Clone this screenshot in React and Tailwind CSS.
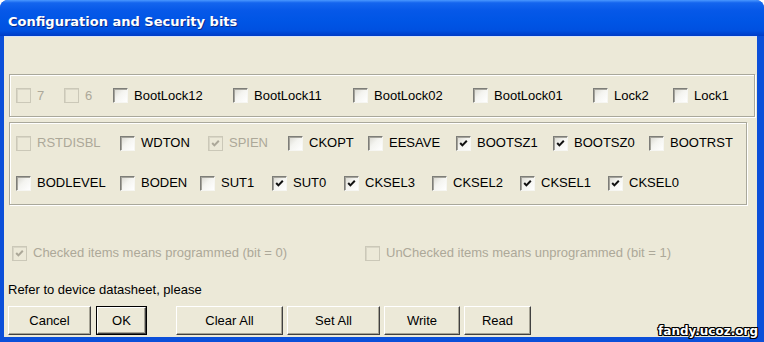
import clsx from 'clsx'

// Fusebits dialog, Windows XP look
const ROW_LOCK = [
  { label: '7', w: 48, disabled: true },
  { label: '6', w: 49, disabled: true },
  { label: 'BootLock12', w: 120 },
  { label: 'BootLock11', w: 120 },
  { label: 'BootLock02', w: 120 },
  { label: 'BootLock01', w: 120 },
  { label: 'Lock2', w: 80 },
  { label: 'Lock1', w: 70 },
]

const ROW_HIGH = [
  { label: 'RSTDISBL', w: 104, disabled: true },
  { label: 'WDTON', w: 88 },
  { label: 'SPIEN', w: 80, disabled: true, checked: true },
  { label: 'CKOPT', w: 80 },
  { label: 'EESAVE', w: 88 },
  { label: 'BOOTSZ1', w: 97, checked: true },
  { label: 'BOOTSZ0', w: 96, checked: true },
  { label: 'BOOTRST', w: 90 },
]

const ROW_LOW = [
  { label: 'BODLEVEL', w: 104 },
  { label: 'BODEN', w: 80 },
  { label: 'SUT1', w: 72 },
  { label: 'SUT0', w: 72, checked: true },
  { label: 'CKSEL3', w: 88, checked: true },
  { label: 'CKSEL2', w: 88 },
  { label: 'CKSEL1', w: 88, checked: true },
  { label: 'CKSEL0', w: 90, checked: true },
]

const BUTTONS = [
  { label: 'Cancel', w: 83, ml: 'ml-0' },
  { label: 'OK', w: 51, ml: 'ml-[5px]', def: true },
  { label: 'Clear All', w: 107, ml: 'ml-[29px]' },
  { label: 'Set All', w: 93, ml: 'ml-[4px]' },
  { label: 'Write', w: 76, ml: 'ml-[4px]' },
  { label: 'Read', w: 67, ml: 'ml-[4px]' },
]

function Box({ checked, disabled }) {
  return (
    <span
      className={clsx(
        'flex h-[15px] w-[15px] shrink-0 items-center justify-center border',
        disabled
          ? 'border-[#cbc8b8] bg-[#ece9d8] shadow-[inset_1px_1px_0_#d9d6c6]'
          : 'border-t-[#7d7d78] border-l-[#7d7d78] border-b-[#f6f6f2] border-r-[#f6f6f2] bg-[linear-gradient(135deg,#d8d7cf_0%,#f4f4f0_45%,#ffffff_100%)] shadow-[inset_1px_1px_0_#a5a49c]'
      )}
    >
      {checked && (
        <svg width="9" height="9" viewBox="0 0 9 9">
          <polyline
            points="1.2,4 3.4,6.4 7.8,1.8"
            fill="none"
            stroke={disabled ? '#aca899' : '#111'}
            strokeWidth="2"
          />
        </svg>
      )}
    </span>
  )
}

function Check({ label, w, checked, disabled }) {
  return (
    <div className="flex h-[16px] shrink-0 items-center gap-[6px]" style={{ width: w }}>
      <Box checked={checked} disabled={disabled} />
      <span className={clsx('whitespace-nowrap leading-[16px]', disabled ? 'text-[#aca899]' : 'text-black')}>
        {label}
      </span>
    </div>
  )
}

function Button({ label, w, ml, def }) {
  return (
    <div className={clsx('h-[29px] shrink-0', ml, def && 'border border-black')} style={{ width: w }}>
      <button
        className={clsx(
          'flex h-full w-full items-center justify-center bg-[#ece9d8] text-black',
          'border-t border-l border-t-white border-l-white border-b border-r border-b-[#404040] border-r-[#404040]',
          'shadow-[inset_-1px_-1px_0_#a6a394]'
        )}
      >
        {label}
      </button>
    </div>
  )
}

export default function App() {
  return (
    <div className="relative flex h-[342px] w-[764px] flex-col overflow-hidden rounded-t-[8px] bg-[#0b4fd9] font-['Liberation_Sans',Arial,sans-serif] text-[13px]">
      {/* title bar */}
      <div className="flex h-[36px] shrink-0 items-center bg-[linear-gradient(to_bottom,#4a98ff_0%,#1465ee_8%,#0658e8_30%,#0055e5_60%,#0050e0_85%,#003cc6_100%)] pl-[8px] pt-[8px]">
        <span className="font-['DejaVu_Sans',sans-serif] text-[13px] font-bold text-white [text-shadow:1px_1px_0_#0a2a8a]">
          Configuration and Security bits
        </span>
      </div>

      {/* client area */}
      <div className="flex flex-1 pl-[4px] pr-[7px] pb-[5px]">
        <div className="flex flex-1 flex-col border-t border-t-[#d8e4f8] bg-[#ece9d8]">
          {/* lock bits */}
          <div className="ml-[5px] mt-[37px] flex h-[43px] w-[746px] items-center border border-[#a9a89b] pl-[6px] shadow-[inset_1px_1px_0_#fff,1px_1px_0_#fff]">
            {ROW_LOCK.map((c) => (
              <Check key={c.label} {...c} />
            ))}
          </div>

          {/* fuse bits */}
          <div className="ml-[5px] mt-[5px] flex h-[83px] w-[738px] flex-col gap-[24px] border border-[#a9a89b] pl-[6px] pt-[12px] shadow-[inset_1px_1px_0_#fff,1px_1px_0_#fff]">
            <div className="flex">
              {ROW_HIGH.map((c) => (
                <Check key={c.label} {...c} />
              ))}
            </div>
            <div className="flex">
              {ROW_LOW.map((c) => (
                <Check key={c.label} {...c} />
              ))}
            </div>
          </div>

          {/* legend */}
          <div className="ml-[8px] mt-[40px] flex">
            <Check label="Checked items means programmed (bit = 0)" w={353} checked disabled />
            <Check label="UnChecked items means unprogrammed (bit = 1)" w={330} disabled />
          </div>

          <div className="ml-[4px] mt-[21px] h-[16px] leading-[16px] text-black">Refer to device datasheet, please</div>

          <div className="ml-[4px] mt-[8px] flex">
            {BUTTONS.map((b) => (
              <Button key={b.label} {...b} />
            ))}
          </div>
        </div>
      </div>

      {/* watermark */}
      <span className="absolute bottom-[4px] right-[6px] font-['DejaVu_Sans',sans-serif] text-[12px] font-bold leading-[14px] text-white [text-shadow:1px_0_0_#000,-1px_0_0_#000,0_1px_0_#000,0_-1px_0_#000,1px_1px_0_#000,-1px_-1px_0_#000,1px_-1px_0_#000,-1px_1px_0_#000]">
        fandy.ucoz.org
      </span>
    </div>
  )
}
